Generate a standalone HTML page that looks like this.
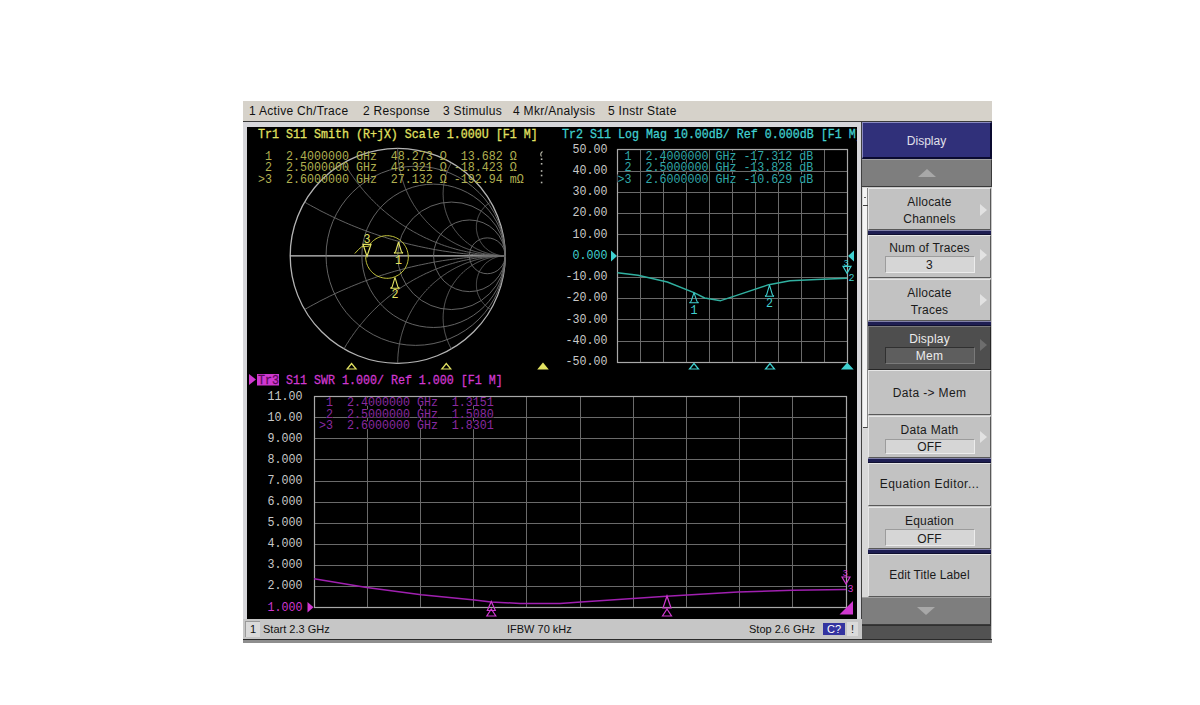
<!DOCTYPE html><html><head><meta charset="utf-8"><style>
*{margin:0;padding:0;box-sizing:border-box}
html,body{width:1200px;height:705px;background:#fff;overflow:hidden;position:relative;font-family:"Liberation Sans",sans-serif}
.a{position:absolute}
.menu{left:243px;top:101px;width:749px;height:20px;background:#d6d2ca}
.menu span{position:absolute;top:3px;font-size:12px;color:#111;letter-spacing:0.3px;white-space:nowrap}
.sk{position:absolute;left:868px;width:123px;background:#c4c4c4;border-top:1px solid #e8e8e8;border-left:1px solid #e8e8e8;border-right:1px solid #5a5a5a;border-bottom:1px solid #5a5a5a;color:#1a1a1a;font-size:12px;text-align:center;white-space:nowrap}
.sk .t{position:absolute;left:0;right:0}
.sk .box{position:absolute;left:16px;width:91px;height:15px;background:#d4d4d4;border-top:1px solid #707070;border-left:1px solid #707070;border-bottom:1px solid #f0f0f0;border-right:1px solid #f0f0f0;text-align:center;line-height:13px}
.arr{position:absolute;right:2px;width:0;height:0;border-top:8px solid transparent;border-bottom:8px solid transparent;border-left:6px solid #e4e4e4}
.sep{position:absolute;left:868px;width:123px;background:#24245a}
</style></head><body>
<div class="a menu">
<span style="left:6px">1 Active Ch/Trace</span>
<span style="left:120px">2 Response</span>
<span style="left:200px">3 Stimulus</span>
<span style="left:270px">4 Mkr/Analysis</span>
<span style="left:365px">5 Instr State</span>
</div>
<div class="a" style="left:243px;top:121px;width:749px;height:1px;background:#3a3a3a"></div>
<div class="a" style="left:243px;top:122px;width:619px;height:497px;background:#d6d6da"></div>
<div class="a" style="left:861px;top:122px;width:1px;height:497px;background:#404040"></div>
<div class="a" style="left:247px;top:127px;width:610px;height:492px;background:#000"></div>
<div class="a" style="left:862px;top:122px;width:130px;height:521px;background:#c8c8c8"></div>
<div class="a" style="left:243px;top:619px;width:619px;height:20px;background:#c6c6c6"></div>
<div class="a" style="left:245px;top:621px;width:15px;height:16px;background:#dadada;border-top:1px solid #9a9a9a;border-left:1px solid #9a9a9a;font-size:11px;line-height:14px;text-align:center;color:#111">1</div>
<div class="a" style="left:263px;top:623px;font-size:11px;color:#111;white-space:nowrap">Start 2.3 GHz</div>
<div class="a" style="left:507px;top:623px;font-size:11px;color:#111;white-space:nowrap">IFBW 70 kHz</div>
<div class="a" style="left:749px;top:623px;font-size:11px;color:#111;white-space:nowrap">Stop 2.6 GHz</div>
<div class="a" style="left:823px;top:623px;width:22px;height:12px;background:#3434a0;color:#fff;font-size:11px;line-height:12px;text-align:center">C?</div>
<div class="a" style="left:847px;top:622px;width:11px;height:14px;background:#dadada;color:#111;font-size:11px;line-height:14px;text-align:center">!</div>
<div class="a" style="left:862px;top:187px;width:6px;height:431px;background:#d8d8d8"></div>
<div class="a" style="left:863px;top:188px;width:5px;height:240px;background:#f4f4f4;border-right:1px solid #888;border-bottom:1px solid #444"></div>
<div class="a" style="left:863px;top:205px;width:5px;height:1px;background:#404040"></div>
<div class="a" style="left:864px;top:197px;width:2px;height:1px;background:#606060"></div>
<div class="a" style="left:862px;top:122px;width:130px;height:37px;background:#30307a;border-top:1px solid #8a8ac0;border-left:1px solid #8a8ac0;border-right:2px solid #0a0a30;border-bottom:2px solid #0a0a30;"></div>
<div class="a" style="left:846.5px;width:160px;top:135.34px;line-height:12px;font-size:12px;color:#e0e0ea;text-align:center;letter-spacing:0px;white-space:pre">Display</div>
<div class="a" style="left:862px;top:159px;width:130px;height:28px;background:#7e7e7e;border-top:1px solid #a0a0a0;border-bottom:1px solid #3a3a3a;border-right:1px solid #3a3a3a"></div>
<div class="a" style="left:918px;top:169px;width:0;height:0;border-left:9px solid transparent;border-right:9px solid transparent;border-bottom:8px solid #a8a8a8"></div>
<div class="a" style="left:868px;top:188px;width:123px;height:42px;background:#c2c2c2;border-top:1px solid #e6e6e6;border-left:1px solid #e6e6e6;border-right:1px solid #585858;border-bottom:1px solid #585858"></div>
<div class="a" style="left:849.5px;width:160px;top:196.44px;line-height:12px;font-size:12px;color:#1a1a1a;text-align:center;letter-spacing:0.2px;white-space:pre">Allocate</div>
<div class="a" style="left:849.5px;width:160px;top:213.24px;line-height:12px;font-size:12px;color:#1a1a1a;text-align:center;letter-spacing:0.2px;white-space:pre">Channels</div>
<div class="a" style="left:980px;top:203.8px;width:0;height:0;border-top:6.5px solid transparent;border-bottom:6.5px solid transparent;border-left:7px solid #e2e2e2"></div>
<div class="a" style="left:868px;top:230px;width:123px;height:5px;background:#1e1e52;border-top:1px solid #8080a8;border-bottom:1px solid #101030"></div>
<div class="a" style="left:868px;top:235px;width:123px;height:43px;background:#c2c2c2;border-top:1px solid #e6e6e6;border-left:1px solid #e6e6e6;border-right:1px solid #585858;border-bottom:1px solid #585858"></div>
<div class="a" style="left:849.5px;width:160px;top:241.84px;line-height:12px;font-size:12px;color:#1a1a1a;text-align:center;letter-spacing:0.2px;white-space:pre">Num of Traces</div>
<div class="a" style="left:885px;top:256.4px;width:90px;height:16.200000000000045px;background:#d6d6d6;border-top:1px solid #9c9c9c;border-left:1px solid #9c9c9c;border-right:1px solid #ececec;border-bottom:1px solid #ececec"></div>
<div class="a" style="left:849.5px;width:160px;top:259.04px;line-height:12px;font-size:12px;color:#1a1a1a;text-align:center;letter-spacing:0.2px;white-space:pre">3</div>
<div class="a" style="left:980px;top:249.0px;width:0;height:0;border-top:6.5px solid transparent;border-bottom:6.5px solid transparent;border-left:7px solid #e2e2e2"></div>
<div class="a" style="left:868px;top:279px;width:123px;height:42px;background:#c2c2c2;border-top:1px solid #e6e6e6;border-left:1px solid #e6e6e6;border-right:1px solid #585858;border-bottom:1px solid #585858"></div>
<div class="a" style="left:849.5px;width:160px;top:287.34px;line-height:12px;font-size:12px;color:#1a1a1a;text-align:center;letter-spacing:0.2px;white-space:pre">Allocate</div>
<div class="a" style="left:849.5px;width:160px;top:304.24px;line-height:12px;font-size:12px;color:#1a1a1a;text-align:center;letter-spacing:0.2px;white-space:pre">Traces</div>
<div class="a" style="left:980px;top:293.5px;width:0;height:0;border-top:6.5px solid transparent;border-bottom:6.5px solid transparent;border-left:7px solid #e2e2e2"></div>
<div class="a" style="left:868px;top:321px;width:123px;height:5px;background:#1e1e52;border-top:1px solid #8080a8;border-bottom:1px solid #101030"></div>
<div class="a" style="left:868px;top:326px;width:123px;height:43.5px;background:#4e4e4e;border-top:1px solid #7a7a7a;border-left:1px solid #7a7a7a;border-right:1px solid #262626;border-bottom:1px solid #262626"></div>
<div class="a" style="left:849.5px;width:160px;top:332.54px;line-height:12px;font-size:12px;color:#ececec;text-align:center;letter-spacing:0.2px;white-space:pre">Display</div>
<div class="a" style="left:885px;top:346.7px;width:90px;height:16.900000000000034px;background:#5e5e5e;border-top:1px solid #303030;border-left:1px solid #303030;border-right:1px solid #7a7a7a;border-bottom:1px solid #7a7a7a"></div>
<div class="a" style="left:849.5px;width:160px;top:350.04px;line-height:12px;font-size:12px;color:#ececec;text-align:center;letter-spacing:0.2px;white-space:pre">Mem</div>
<div class="a" style="left:980px;top:339.3px;width:0;height:0;border-top:6.5px solid transparent;border-bottom:6.5px solid transparent;border-left:7px solid #6e6e6e"></div>
<div class="a" style="left:868px;top:370px;width:123px;height:44.5px;background:#c2c2c2;border-top:1px solid #e6e6e6;border-left:1px solid #e6e6e6;border-right:1px solid #585858;border-bottom:1px solid #585858"></div>
<div class="a" style="left:849.5px;width:160px;top:386.84px;line-height:12px;font-size:12px;color:#1a1a1a;text-align:center;letter-spacing:0.35px;white-space:pre">Data -&gt; Mem</div>
<div class="a" style="left:868px;top:415.5px;width:123px;height:42.0px;background:#c2c2c2;border-top:1px solid #e6e6e6;border-left:1px solid #e6e6e6;border-right:1px solid #585858;border-bottom:1px solid #585858"></div>
<div class="a" style="left:849.5px;width:160px;top:423.84px;line-height:12px;font-size:12px;color:#1a1a1a;text-align:center;letter-spacing:0.29px;white-space:pre">Data Math</div>
<div class="a" style="left:885px;top:438.7px;width:90px;height:15.5px;background:#d6d6d6;border-top:1px solid #9c9c9c;border-left:1px solid #9c9c9c;border-right:1px solid #ececec;border-bottom:1px solid #ececec"></div>
<div class="a" style="left:849.5px;width:160px;top:441.34px;line-height:12px;font-size:12px;color:#1a1a1a;text-align:center;letter-spacing:0.2px;white-space:pre">OFF</div>
<div class="a" style="left:980px;top:430.8px;width:0;height:0;border-top:6.5px solid transparent;border-bottom:6.5px solid transparent;border-left:7px solid #e2e2e2"></div>
<div class="a" style="left:868px;top:457.5px;width:123px;height:5.5px;background:#1e1e52;border-top:1px solid #8080a8;border-bottom:1px solid #101030"></div>
<div class="a" style="left:868px;top:463px;width:123px;height:43px;background:#c2c2c2;border-top:1px solid #e6e6e6;border-left:1px solid #e6e6e6;border-right:1px solid #585858;border-bottom:1px solid #585858"></div>
<div class="a" style="left:849.5px;width:160px;top:478.04px;line-height:12px;font-size:12px;color:#1a1a1a;text-align:center;letter-spacing:0.45px;white-space:pre">Equation Editor...</div>
<div class="a" style="left:868px;top:506.5px;width:123px;height:42.0px;background:#c2c2c2;border-top:1px solid #e6e6e6;border-left:1px solid #e6e6e6;border-right:1px solid #585858;border-bottom:1px solid #585858"></div>
<div class="a" style="left:849.5px;width:160px;top:515.44px;line-height:12px;font-size:12px;color:#1a1a1a;text-align:center;letter-spacing:0.2px;white-space:pre">Equation</div>
<div class="a" style="left:885px;top:529px;width:90px;height:17px;background:#d6d6d6;border-top:1px solid #9c9c9c;border-left:1px solid #9c9c9c;border-right:1px solid #ececec;border-bottom:1px solid #ececec"></div>
<div class="a" style="left:849.5px;width:160px;top:532.74px;line-height:12px;font-size:12px;color:#1a1a1a;text-align:center;letter-spacing:0.2px;white-space:pre">OFF</div>
<div class="a" style="left:868px;top:548.5px;width:123px;height:5.5px;background:#1e1e52;border-top:1px solid #8080a8;border-bottom:1px solid #101030"></div>
<div class="a" style="left:868px;top:554px;width:123px;height:43px;background:#c2c2c2;border-top:1px solid #e6e6e6;border-left:1px solid #e6e6e6;border-right:1px solid #585858;border-bottom:1px solid #585858"></div>
<div class="a" style="left:849.5px;width:160px;top:568.64px;line-height:12px;font-size:12px;color:#1a1a1a;text-align:center;letter-spacing:0.1px;white-space:pre">Edit Title Label</div>
<div class="a" style="left:862px;top:597px;width:129px;height:28px;background:#7e7e7e;border-top:1px solid #a0a0a0;border-bottom:1px solid #3a3a3a;border-right:1px solid #3a3a3a"></div>
<div class="a" style="left:917px;top:607px;width:0;height:0;border-left:9px solid transparent;border-right:9px solid transparent;border-top:8px solid #a8a8a8"></div>
<div class="a" style="left:862px;top:625px;width:129px;height:14px;background:#525252;border-top:1px solid #303030"></div>
<div class="a" style="left:243px;top:639px;width:749px;height:1.5px;background:#2a2a2a"></div>
<div class="a" style="left:243px;top:640px;width:749px;height:3px;background:#8e8e8e"></div>
<svg class="a" style="left:0;top:0" width="1200" height="705" viewBox="0 0 1200 705" font-family="Liberation Mono, monospace">
<defs><clipPath id="blk"><rect x="247" y="127" width="610" height="492"/></clipPath></defs><g clip-path="url(#blk)">
<circle cx="397.7" cy="255.8" r="107.5" fill="none" stroke="#b4b4b4" stroke-width="1.3"/>
<line x1="290.2" y1="255.8" x2="505.2" y2="255.8" stroke="#c8c8c8" stroke-width="1.3"/>
<circle cx="415.62" cy="255.80" r="89.58" fill="none" stroke="#6e6e6e" stroke-width="0.9"/>
<circle cx="433.53" cy="255.80" r="71.67" fill="none" stroke="#6e6e6e" stroke-width="0.9"/>
<circle cx="451.45" cy="255.80" r="53.75" fill="none" stroke="#6e6e6e" stroke-width="0.9"/>
<circle cx="469.37" cy="255.80" r="35.83" fill="none" stroke="#6e6e6e" stroke-width="0.9"/>
<circle cx="487.28" cy="255.80" r="17.92" fill="none" stroke="#6e6e6e" stroke-width="0.9"/>
<path d="M304.6,202.0 L307.6,203.8 L310.7,205.5 L313.8,207.2 L316.9,208.8 L319.9,210.5 L323.1,212.1 L326.2,213.6 L329.3,215.2 L332.5,216.7 L335.6,218.2 L338.8,219.7 L342.0,221.1 L345.2,222.5 L348.4,223.9 L351.7,225.3 L354.9,226.6 L358.2,227.9 L361.4,229.2 L364.7,230.4 L368.0,231.6 L371.3,232.8 L374.6,233.9 L377.9,235.1 L381.2,236.2 L384.6,237.2 L387.9,238.3 L391.3,239.3 L394.6,240.3 L398.0,241.2 L401.4,242.1 L404.7,243.0 L408.1,243.9 L411.5,244.7 L415.0,245.5 L418.4,246.3 L421.8,247.0 L425.2,247.7 L428.6,248.4 L432.1,249.1 L435.5,249.7 L439.0,250.3 L442.4,250.9 L445.9,251.4 L449.4,251.9 L452.8,252.4 L456.3,252.8 L459.8,253.2 L463.3,253.6 L466.7,254.0 L470.2,254.3 L473.7,254.6 L477.2,254.8 L480.7,255.1 L484.2,255.3 L487.7,255.4 L491.2,255.6 L494.7,255.7 L498.2,255.7 L501.7,255.8 L505.2,255.8" fill="none" stroke="#6e6e6e" stroke-width="0.9"/>
<path d="M505.2,255.8 L501.7,255.8 L498.2,255.9 L494.7,255.9 L491.2,256.0 L487.7,256.2 L484.2,256.3 L480.7,256.5 L477.2,256.8 L473.7,257.0 L470.2,257.3 L466.7,257.6 L463.3,258.0 L459.8,258.4 L456.3,258.8 L452.8,259.2 L449.4,259.7 L445.9,260.2 L442.4,260.7 L439.0,261.3 L435.5,261.9 L432.1,262.5 L428.6,263.2 L425.2,263.9 L421.8,264.6 L418.4,265.3 L415.0,266.1 L411.5,266.9 L408.1,267.7 L404.7,268.6 L401.4,269.5 L398.0,270.4 L394.6,271.3 L391.3,272.3 L387.9,273.3 L384.6,274.4 L381.2,275.4 L377.9,276.5 L374.6,277.7 L371.3,278.8 L368.0,280.0 L364.7,281.2 L361.4,282.4 L358.2,283.7 L354.9,285.0 L351.7,286.3 L348.4,287.7 L345.2,289.1 L342.0,290.5 L338.8,291.9 L335.6,293.4 L332.5,294.9 L329.3,296.4 L326.2,298.0 L323.1,299.5 L319.9,301.1 L316.9,302.8 L313.8,304.4 L310.7,306.1 L307.6,307.8 L304.6,309.6" fill="none" stroke="#6e6e6e" stroke-width="0.9"/>
<path d="M343.9,162.7 L344.8,164.1 L345.6,165.5 L346.4,166.9 L347.3,168.3 L348.2,169.6 L349.0,171.0 L349.9,172.4 L350.8,173.7 L351.8,175.1 L352.7,176.4 L353.6,177.7 L354.6,179.0 L355.5,180.4 L356.5,181.7 L357.5,183.0 L358.5,184.2 L359.5,185.5 L360.5,186.8 L361.5,188.0 L362.6,189.3 L363.6,190.5 L364.7,191.8 L365.7,193.0 L366.8,194.2 L367.9,195.4 L369.0,196.6 L370.1,197.8 L371.3,198.9 L372.4,200.1 L373.5,201.3 L374.7,202.4 L375.9,203.5 L377.0,204.7 L378.2,205.8 L379.4,206.9 L380.6,208.0 L381.8,209.1 L383.0,210.1 L384.3,211.2 L385.5,212.2 L386.8,213.3 L388.0,214.3 L389.3,215.3 L390.6,216.3 L391.9,217.3 L393.1,218.3 L394.4,219.3 L395.8,220.2 L397.1,221.2 L398.4,222.1 L399.7,223.1 L401.1,224.0 L402.4,224.9 L403.8,225.8 L405.2,226.6 L406.5,227.5 L407.9,228.4 L409.3,229.2 L410.7,230.0 L412.1,230.9 L413.5,231.7 L414.9,232.5 L416.4,233.2 L417.8,234.0 L419.2,234.8 L420.7,235.5 L422.1,236.2 L423.6,237.0 L425.0,237.7 L426.5,238.4 L428.0,239.0 L429.5,239.7 L431.0,240.4 L432.4,241.0 L433.9,241.6 L435.4,242.2 L437.0,242.8 L438.5,243.4 L440.0,244.0 L441.5,244.6 L443.0,245.1 L444.6,245.7 L446.1,246.2 L447.7,246.7 L449.2,247.2 L450.8,247.7 L452.3,248.1 L453.9,248.6 L455.4,249.0 L457.0,249.5 L458.6,249.9 L460.2,250.3 L461.7,250.7 L463.3,251.0 L464.9,251.4 L466.5,251.7 L468.1,252.1 L469.7,252.4 L471.3,252.7 L472.9,253.0 L474.5,253.2 L476.1,253.5 L477.7,253.8 L479.3,254.0 L480.9,254.2 L482.5,254.4 L484.1,254.6 L485.7,254.8 L487.4,254.9 L489.0,255.1 L490.6,255.2 L492.2,255.3 L493.8,255.5 L495.5,255.5 L497.1,255.6 L498.7,255.7 L500.3,255.7 L502.0,255.8 L503.6,255.8 L505.2,255.8" fill="none" stroke="#6e6e6e" stroke-width="0.9"/>
<path d="M505.2,255.8 L503.6,255.8 L502.0,255.8 L500.3,255.9 L498.7,255.9 L497.1,256.0 L495.5,256.1 L493.8,256.1 L492.2,256.3 L490.6,256.4 L489.0,256.5 L487.4,256.7 L485.7,256.8 L484.1,257.0 L482.5,257.2 L480.9,257.4 L479.3,257.6 L477.7,257.8 L476.1,258.1 L474.5,258.4 L472.9,258.6 L471.3,258.9 L469.7,259.2 L468.1,259.5 L466.5,259.9 L464.9,260.2 L463.3,260.6 L461.7,260.9 L460.2,261.3 L458.6,261.7 L457.0,262.1 L455.4,262.6 L453.9,263.0 L452.3,263.5 L450.8,263.9 L449.2,264.4 L447.7,264.9 L446.1,265.4 L444.6,265.9 L443.0,266.5 L441.5,267.0 L440.0,267.6 L438.5,268.2 L437.0,268.8 L435.4,269.4 L433.9,270.0 L432.4,270.6 L431.0,271.2 L429.5,271.9 L428.0,272.6 L426.5,273.2 L425.0,273.9 L423.6,274.6 L422.1,275.4 L420.7,276.1 L419.2,276.8 L417.8,277.6 L416.4,278.4 L414.9,279.1 L413.5,279.9 L412.1,280.7 L410.7,281.6 L409.3,282.4 L407.9,283.2 L406.5,284.1 L405.2,285.0 L403.8,285.8 L402.4,286.7 L401.1,287.6 L399.7,288.5 L398.4,289.5 L397.1,290.4 L395.8,291.4 L394.4,292.3 L393.1,293.3 L391.9,294.3 L390.6,295.3 L389.3,296.3 L388.0,297.3 L386.8,298.3 L385.5,299.4 L384.3,300.4 L383.0,301.5 L381.8,302.5 L380.6,303.6 L379.4,304.7 L378.2,305.8 L377.0,306.9 L375.9,308.1 L374.7,309.2 L373.5,310.3 L372.4,311.5 L371.3,312.7 L370.1,313.8 L369.0,315.0 L367.9,316.2 L366.8,317.4 L365.7,318.6 L364.7,319.8 L363.6,321.1 L362.6,322.3 L361.5,323.6 L360.5,324.8 L359.5,326.1 L358.5,327.4 L357.5,328.6 L356.5,329.9 L355.5,331.2 L354.6,332.6 L353.6,333.9 L352.7,335.2 L351.8,336.5 L350.8,337.9 L349.9,339.2 L349.0,340.6 L348.2,342.0 L347.3,343.3 L346.4,344.7 L345.6,346.1 L344.8,347.5 L343.9,348.9" fill="none" stroke="#6e6e6e" stroke-width="0.9"/>
<path d="M397.7,148.3 L397.7,149.2 L397.7,150.2 L397.7,151.1 L397.8,152.1 L397.8,153.0 L397.8,153.9 L397.9,154.9 L398.0,155.8 L398.0,156.7 L398.1,157.7 L398.2,158.6 L398.3,159.5 L398.4,160.5 L398.5,161.4 L398.6,162.3 L398.7,163.3 L398.9,164.2 L399.0,165.1 L399.2,166.0 L399.3,167.0 L399.5,167.9 L399.7,168.8 L399.9,169.7 L400.0,170.7 L400.2,171.6 L400.5,172.5 L400.7,173.4 L400.9,174.3 L401.1,175.2 L401.4,176.1 L401.6,177.0 L401.9,177.9 L402.1,178.8 L402.4,179.7 L402.7,180.6 L403.0,181.5 L403.3,182.4 L403.6,183.3 L403.9,184.2 L404.2,185.1 L404.5,185.9 L404.8,186.8 L405.2,187.7 L405.5,188.6 L405.9,189.4 L406.2,190.3 L406.6,191.2 L407.0,192.0 L407.4,192.9 L407.8,193.7 L408.2,194.6 L408.6,195.4 L409.0,196.3 L409.4,197.1 L409.8,197.9 L410.3,198.8 L410.7,199.6 L411.2,200.4 L411.6,201.2 L412.1,202.1 L412.6,202.9 L413.1,203.7 L413.5,204.5 L414.0,205.3 L414.5,206.1 L415.0,206.8 L415.6,207.6 L416.1,208.4 L416.6,209.2 L417.1,210.0 L417.7,210.7 L418.2,211.5 L418.8,212.2 L419.3,213.0 L419.9,213.7 L420.5,214.5 L421.1,215.2 L421.7,216.0 L422.3,216.7 L422.9,217.4 L423.5,218.1 L424.1,218.8 L424.7,219.5 L425.3,220.2 L425.9,220.9 L426.6,221.6 L427.2,222.3 L427.9,223.0 L428.5,223.6 L429.2,224.3 L429.9,225.0 L430.5,225.6 L431.2,226.3 L431.9,226.9 L432.6,227.6 L433.3,228.2 L434.0,228.8 L434.7,229.4 L435.4,230.0 L436.1,230.6 L436.8,231.2 L437.5,231.8 L438.3,232.4 L439.0,233.0 L439.8,233.6 L440.5,234.2 L441.3,234.7 L442.0,235.3 L442.8,235.8 L443.5,236.4 L444.3,236.9 L445.1,237.4 L445.9,237.9 L446.7,238.5 L447.4,239.0 L448.2,239.5 L449.0,240.0 L449.8,240.4 L450.6,240.9 L451.4,241.4 L452.3,241.9 L453.1,242.3 L453.9,242.8 L454.7,243.2 L455.6,243.7 L456.4,244.1 L457.2,244.5 L458.1,244.9 L458.9,245.3 L459.8,245.7 L460.6,246.1 L461.5,246.5 L462.3,246.9 L463.2,247.3 L464.1,247.6 L464.9,248.0 L465.8,248.3 L466.7,248.7 L467.6,249.0 L468.4,249.3 L469.3,249.6 L470.2,249.9 L471.1,250.2 L472.0,250.5 L472.9,250.8 L473.8,251.1 L474.7,251.4 L475.6,251.6 L476.5,251.9 L477.4,252.1 L478.3,252.4 L479.2,252.6 L480.1,252.8 L481.0,253.0 L481.9,253.3 L482.8,253.5 L483.8,253.6 L484.7,253.8 L485.6,254.0 L486.5,254.2 L487.5,254.3 L488.4,254.5 L489.3,254.6 L490.2,254.8 L491.2,254.9 L492.1,255.0 L493.0,255.1 L494.0,255.2 L494.9,255.3 L495.8,255.4 L496.8,255.5 L497.7,255.5 L498.6,255.6 L499.6,255.7 L500.5,255.7 L501.4,255.7 L502.4,255.8 L503.3,255.8 L504.3,255.8 L505.2,255.8" fill="none" stroke="#6e6e6e" stroke-width="0.9"/>
<path d="M505.2,255.8 L504.3,255.8 L503.3,255.8 L502.4,255.8 L501.4,255.9 L500.5,255.9 L499.6,255.9 L498.6,256.0 L497.7,256.1 L496.8,256.1 L495.8,256.2 L494.9,256.3 L494.0,256.4 L493.0,256.5 L492.1,256.6 L491.2,256.7 L490.2,256.8 L489.3,257.0 L488.4,257.1 L487.5,257.3 L486.5,257.4 L485.6,257.6 L484.7,257.8 L483.8,258.0 L482.8,258.1 L481.9,258.3 L481.0,258.6 L480.1,258.8 L479.2,259.0 L478.3,259.2 L477.4,259.5 L476.5,259.7 L475.6,260.0 L474.7,260.2 L473.8,260.5 L472.9,260.8 L472.0,261.1 L471.1,261.4 L470.2,261.7 L469.3,262.0 L468.4,262.3 L467.6,262.6 L466.7,262.9 L465.8,263.3 L464.9,263.6 L464.1,264.0 L463.2,264.3 L462.3,264.7 L461.5,265.1 L460.6,265.5 L459.8,265.9 L458.9,266.3 L458.1,266.7 L457.2,267.1 L456.4,267.5 L455.6,267.9 L454.7,268.4 L453.9,268.8 L453.1,269.3 L452.3,269.7 L451.4,270.2 L450.6,270.7 L449.8,271.2 L449.0,271.6 L448.2,272.1 L447.4,272.6 L446.7,273.1 L445.9,273.7 L445.1,274.2 L444.3,274.7 L443.5,275.2 L442.8,275.8 L442.0,276.3 L441.3,276.9 L440.5,277.4 L439.8,278.0 L439.0,278.6 L438.3,279.2 L437.5,279.8 L436.8,280.4 L436.1,281.0 L435.4,281.6 L434.7,282.2 L434.0,282.8 L433.3,283.4 L432.6,284.0 L431.9,284.7 L431.2,285.3 L430.5,286.0 L429.9,286.6 L429.2,287.3 L428.5,288.0 L427.9,288.6 L427.2,289.3 L426.6,290.0 L425.9,290.7 L425.3,291.4 L424.7,292.1 L424.1,292.8 L423.5,293.5 L422.9,294.2 L422.3,294.9 L421.7,295.6 L421.1,296.4 L420.5,297.1 L419.9,297.9 L419.3,298.6 L418.8,299.4 L418.2,300.1 L417.7,300.9 L417.1,301.6 L416.6,302.4 L416.1,303.2 L415.6,304.0 L415.0,304.8 L414.5,305.5 L414.0,306.3 L413.5,307.1 L413.1,307.9 L412.6,308.7 L412.1,309.6 L411.6,310.4 L411.2,311.2 L410.7,312.0 L410.3,312.8 L409.8,313.7 L409.4,314.5 L409.0,315.3 L408.6,316.2 L408.2,317.0 L407.8,317.9 L407.4,318.7 L407.0,319.6 L406.6,320.4 L406.2,321.3 L405.9,322.2 L405.5,323.0 L405.2,323.9 L404.8,324.8 L404.5,325.7 L404.2,326.5 L403.9,327.4 L403.6,328.3 L403.3,329.2 L403.0,330.1 L402.7,331.0 L402.4,331.9 L402.1,332.8 L401.9,333.7 L401.6,334.6 L401.4,335.5 L401.1,336.4 L400.9,337.3 L400.7,338.2 L400.5,339.1 L400.2,340.0 L400.0,340.9 L399.9,341.9 L399.7,342.8 L399.5,343.7 L399.3,344.6 L399.2,345.6 L399.0,346.5 L398.9,347.4 L398.7,348.3 L398.6,349.3 L398.5,350.2 L398.4,351.1 L398.3,352.1 L398.2,353.0 L398.1,353.9 L398.0,354.9 L398.0,355.8 L397.9,356.7 L397.8,357.7 L397.8,358.6 L397.8,359.5 L397.7,360.5 L397.7,361.4 L397.7,362.4 L397.7,363.3" fill="none" stroke="#6e6e6e" stroke-width="0.9"/>
<path d="M451.4,162.7 L451.2,163.2 L450.9,163.6 L450.7,164.1 L450.4,164.6 L450.1,165.1 L449.9,165.6 L449.7,166.0 L449.4,166.5 L449.2,167.0 L448.9,167.5 L448.7,168.0 L448.5,168.5 L448.3,169.0 L448.1,169.5 L447.9,170.0 L447.7,170.5 L447.5,171.0 L447.3,171.5 L447.1,172.0 L446.9,172.5 L446.7,173.0 L446.5,173.5 L446.3,174.0 L446.2,174.6 L446.0,175.1 L445.8,175.6 L445.7,176.1 L445.5,176.6 L445.4,177.1 L445.2,177.7 L445.1,178.2 L445.0,178.7 L444.8,179.2 L444.7,179.8 L444.6,180.3 L444.5,180.8 L444.4,181.4 L444.3,181.9 L444.2,182.4 L444.1,183.0 L444.0,183.5 L443.9,184.0 L443.8,184.6 L443.7,185.1 L443.7,185.6 L443.6,186.2 L443.5,186.7 L443.5,187.2 L443.4,187.8 L443.4,188.3 L443.3,188.9 L443.3,189.4 L443.3,189.9 L443.2,190.5 L443.2,191.0 L443.2,191.6 L443.2,192.1 L443.1,192.7 L443.1,193.2 L443.1,193.7 L443.1,194.3 L443.1,194.8 L443.2,195.4 L443.2,195.9 L443.2,196.4 L443.2,197.0 L443.3,197.5 L443.3,198.1 L443.3,198.6 L443.4,199.1 L443.4,199.7 L443.5,200.2 L443.5,200.8 L443.6,201.3 L443.7,201.8 L443.7,202.4 L443.8,202.9 L443.9,203.4 L444.0,204.0 L444.1,204.5 L444.2,205.0 L444.3,205.6 L444.4,206.1 L444.5,206.6 L444.6,207.2 L444.7,207.7 L444.8,208.2 L445.0,208.7 L445.1,209.3 L445.2,209.8 L445.4,210.3 L445.5,210.8 L445.7,211.4 L445.8,211.9 L446.0,212.4 L446.2,212.9 L446.3,213.4 L446.5,213.9 L446.7,214.5 L446.9,215.0 L447.1,215.5 L447.3,216.0 L447.5,216.5 L447.7,217.0 L447.9,217.5 L448.1,218.0 L448.3,218.5 L448.5,219.0 L448.7,219.5 L448.9,220.0 L449.2,220.5 L449.4,220.9 L449.7,221.4 L449.9,221.9 L450.1,222.4 L450.4,222.9 L450.7,223.3 L450.9,223.8 L451.2,224.3 L451.4,224.8 L451.7,225.2 L452.0,225.7 L452.3,226.2 L452.6,226.6 L452.9,227.1 L453.1,227.5 L453.4,228.0 L453.7,228.4 L454.1,228.9 L454.4,229.3 L454.7,229.8 L455.0,230.2 L455.3,230.7 L455.6,231.1 L456.0,231.5 L456.3,231.9 L456.6,232.4 L457.0,232.8 L457.3,233.2 L457.7,233.6 L458.0,234.0 L458.4,234.5 L458.7,234.9 L459.1,235.3 L459.4,235.7 L459.8,236.1 L460.2,236.5 L460.6,236.8 L460.9,237.2 L461.3,237.6 L461.7,238.0 L462.1,238.4 L462.5,238.8 L462.9,239.1 L463.3,239.5 L463.7,239.9 L464.1,240.2 L464.5,240.6 L464.9,240.9 L465.3,241.3 L465.7,241.6 L466.1,242.0 L466.6,242.3 L467.0,242.6 L467.4,243.0 L467.8,243.3 L468.3,243.6 L468.7,243.9 L469.2,244.3 L469.6,244.6 L470.0,244.9 L470.5,245.2 L470.9,245.5 L471.4,245.8 L471.9,246.1 L472.3,246.4 L472.8,246.7 L473.2,246.9 L473.7,247.2 L474.2,247.5 L474.6,247.8 L475.1,248.0 L475.6,248.3 L476.1,248.5 L476.5,248.8 L477.0,249.0 L477.5,249.3 L478.0,249.5 L478.5,249.8 L479.0,250.0 L479.5,250.2 L480.0,250.4 L480.5,250.7 L480.9,250.9 L481.4,251.1 L481.9,251.3 L482.5,251.5 L483.0,251.7 L483.5,251.9 L484.0,252.1 L484.5,252.2 L485.0,252.4 L485.5,252.6 L486.0,252.8 L486.5,252.9 L487.1,253.1 L487.6,253.2 L488.1,253.4 L488.6,253.5 L489.1,253.7 L489.7,253.8 L490.2,254.0 L490.7,254.1 L491.2,254.2 L491.8,254.3 L492.3,254.4 L492.8,254.6 L493.4,254.7 L493.9,254.8 L494.4,254.9 L495.0,254.9 L495.5,255.0 L496.0,255.1 L496.6,255.2 L497.1,255.3 L497.6,255.3 L498.2,255.4 L498.7,255.5 L499.3,255.5 L499.8,255.6 L500.3,255.6 L500.9,255.6 L501.4,255.7 L502.0,255.7 L502.5,255.7 L503.0,255.8 L503.6,255.8 L504.1,255.8 L504.7,255.8 L505.2,255.8" fill="none" stroke="#6e6e6e" stroke-width="0.9"/>
<path d="M505.2,255.8 L504.7,255.8 L504.1,255.8 L503.6,255.8 L503.0,255.8 L502.5,255.9 L502.0,255.9 L501.4,255.9 L500.9,256.0 L500.3,256.0 L499.8,256.0 L499.3,256.1 L498.7,256.1 L498.2,256.2 L497.6,256.3 L497.1,256.3 L496.6,256.4 L496.0,256.5 L495.5,256.6 L495.0,256.7 L494.4,256.7 L493.9,256.8 L493.4,256.9 L492.8,257.0 L492.3,257.2 L491.8,257.3 L491.2,257.4 L490.7,257.5 L490.2,257.6 L489.7,257.8 L489.1,257.9 L488.6,258.1 L488.1,258.2 L487.6,258.4 L487.1,258.5 L486.5,258.7 L486.0,258.8 L485.5,259.0 L485.0,259.2 L484.5,259.4 L484.0,259.5 L483.5,259.7 L483.0,259.9 L482.5,260.1 L481.9,260.3 L481.4,260.5 L480.9,260.7 L480.5,260.9 L480.0,261.2 L479.5,261.4 L479.0,261.6 L478.5,261.8 L478.0,262.1 L477.5,262.3 L477.0,262.6 L476.5,262.8 L476.1,263.1 L475.6,263.3 L475.1,263.6 L474.6,263.8 L474.2,264.1 L473.7,264.4 L473.2,264.7 L472.8,264.9 L472.3,265.2 L471.9,265.5 L471.4,265.8 L470.9,266.1 L470.5,266.4 L470.0,266.7 L469.6,267.0 L469.2,267.3 L468.7,267.7 L468.3,268.0 L467.8,268.3 L467.4,268.6 L467.0,269.0 L466.6,269.3 L466.1,269.6 L465.7,270.0 L465.3,270.3 L464.9,270.7 L464.5,271.0 L464.1,271.4 L463.7,271.7 L463.3,272.1 L462.9,272.5 L462.5,272.8 L462.1,273.2 L461.7,273.6 L461.3,274.0 L460.9,274.4 L460.6,274.8 L460.2,275.1 L459.8,275.5 L459.4,275.9 L459.1,276.3 L458.7,276.7 L458.4,277.1 L458.0,277.6 L457.7,278.0 L457.3,278.4 L457.0,278.8 L456.6,279.2 L456.3,279.7 L456.0,280.1 L455.6,280.5 L455.3,280.9 L455.0,281.4 L454.7,281.8 L454.4,282.3 L454.1,282.7 L453.7,283.2 L453.4,283.6 L453.1,284.1 L452.9,284.5 L452.6,285.0 L452.3,285.4 L452.0,285.9 L451.7,286.4 L451.4,286.8 L451.2,287.3 L450.9,287.8 L450.7,288.3 L450.4,288.7 L450.1,289.2 L449.9,289.7 L449.7,290.2 L449.4,290.7 L449.2,291.1 L448.9,291.6 L448.7,292.1 L448.5,292.6 L448.3,293.1 L448.1,293.6 L447.9,294.1 L447.7,294.6 L447.5,295.1 L447.3,295.6 L447.1,296.1 L446.9,296.6 L446.7,297.1 L446.5,297.7 L446.3,298.2 L446.2,298.7 L446.0,299.2 L445.8,299.7 L445.7,300.2 L445.5,300.8 L445.4,301.3 L445.2,301.8 L445.1,302.3 L445.0,302.9 L444.8,303.4 L444.7,303.9 L444.6,304.4 L444.5,305.0 L444.4,305.5 L444.3,306.0 L444.2,306.6 L444.1,307.1 L444.0,307.6 L443.9,308.2 L443.8,308.7 L443.7,309.2 L443.7,309.8 L443.6,310.3 L443.5,310.8 L443.5,311.4 L443.4,311.9 L443.4,312.5 L443.3,313.0 L443.3,313.5 L443.3,314.1 L443.2,314.6 L443.2,315.2 L443.2,315.7 L443.2,316.2 L443.1,316.8 L443.1,317.3 L443.1,317.9 L443.1,318.4 L443.1,318.9 L443.2,319.5 L443.2,320.0 L443.2,320.6 L443.2,321.1 L443.3,321.7 L443.3,322.2 L443.3,322.7 L443.4,323.3 L443.4,323.8 L443.5,324.4 L443.5,324.9 L443.6,325.4 L443.7,326.0 L443.7,326.5 L443.8,327.0 L443.9,327.6 L444.0,328.1 L444.1,328.6 L444.2,329.2 L444.3,329.7 L444.4,330.2 L444.5,330.8 L444.6,331.3 L444.7,331.8 L444.8,332.4 L445.0,332.9 L445.1,333.4 L445.2,333.9 L445.4,334.5 L445.5,335.0 L445.7,335.5 L445.8,336.0 L446.0,336.5 L446.2,337.0 L446.3,337.6 L446.5,338.1 L446.7,338.6 L446.9,339.1 L447.1,339.6 L447.3,340.1 L447.5,340.6 L447.7,341.1 L447.9,341.6 L448.1,342.1 L448.3,342.6 L448.5,343.1 L448.7,343.6 L448.9,344.1 L449.2,344.6 L449.4,345.1 L449.7,345.6 L449.9,346.0 L450.1,346.5 L450.4,347.0 L450.7,347.5 L450.9,348.0 L451.2,348.4 L451.4,348.9" fill="none" stroke="#6e6e6e" stroke-width="0.9"/>
<path d="M490.8,202.1 L490.6,202.2 L490.4,202.3 L490.1,202.4 L489.9,202.6 L489.7,202.7 L489.5,202.8 L489.3,203.0 L489.1,203.1 L488.9,203.3 L488.7,203.4 L488.5,203.5 L488.3,203.7 L488.1,203.8 L487.9,204.0 L487.7,204.1 L487.5,204.3 L487.3,204.5 L487.1,204.6 L486.9,204.8 L486.7,204.9 L486.5,205.1 L486.3,205.3 L486.1,205.4 L485.9,205.6 L485.7,205.8 L485.6,205.9 L485.4,206.1 L485.2,206.3 L485.0,206.5 L484.8,206.6 L484.7,206.8 L484.5,207.0 L484.3,207.2 L484.1,207.4 L484.0,207.5 L483.8,207.7 L483.6,207.9 L483.5,208.1 L483.3,208.3 L483.1,208.5 L483.0,208.7 L482.8,208.9 L482.7,209.1 L482.5,209.3 L482.3,209.5 L482.2,209.7 L482.0,209.9 L481.9,210.1 L481.7,210.3 L481.6,210.5 L481.5,210.7 L481.3,210.9 L481.2,211.1 L481.0,211.3 L480.9,211.5 L480.8,211.7 L480.6,211.9 L480.5,212.2 L480.4,212.4 L480.3,212.6 L480.1,212.8 L480.0,213.0 L479.9,213.3 L479.8,213.5 L479.7,213.7 L479.5,213.9 L479.4,214.1 L479.3,214.4 L479.2,214.6 L479.1,214.8 L479.0,215.1 L478.9,215.3 L478.8,215.5 L478.7,215.7 L478.6,216.0 L478.5,216.2 L478.4,216.4 L478.3,216.7 L478.2,216.9 L478.1,217.1 L478.0,217.4 L478.0,217.6 L477.9,217.9 L477.8,218.1 L477.7,218.3 L477.7,218.6 L477.6,218.8 L477.5,219.1 L477.4,219.3 L477.4,219.5 L477.3,219.8 L477.3,220.0 L477.2,220.3 L477.1,220.5 L477.1,220.8 L477.0,221.0 L477.0,221.3 L476.9,221.5 L476.9,221.7 L476.8,222.0 L476.8,222.2 L476.8,222.5 L476.7,222.7 L476.7,223.0 L476.6,223.2 L476.6,223.5 L476.6,223.7 L476.6,224.0 L476.5,224.2 L476.5,224.5 L476.5,224.7 L476.5,225.0 L476.4,225.2 L476.4,225.5 L476.4,225.7 L476.4,226.0 L476.4,226.2 L476.4,226.5 L476.4,226.7 L476.4,227.0 L476.4,227.2 L476.4,227.5 L476.4,227.7 L476.4,228.0 L476.4,228.3 L476.4,228.5 L476.4,228.8 L476.5,229.0 L476.5,229.3 L476.5,229.5 L476.5,229.8 L476.6,230.0 L476.6,230.3 L476.6,230.5 L476.6,230.8 L476.7,231.0 L476.7,231.3 L476.8,231.5 L476.8,231.7 L476.8,232.0 L476.9,232.2 L476.9,232.5 L477.0,232.7 L477.0,233.0 L477.1,233.2 L477.1,233.5 L477.2,233.7 L477.3,234.0 L477.3,234.2 L477.4,234.5 L477.4,234.7 L477.5,234.9 L477.6,235.2 L477.7,235.4 L477.7,235.7 L477.8,235.9 L477.9,236.1 L478.0,236.4 L478.0,236.6 L478.1,236.8 L478.2,237.1 L478.3,237.3 L478.4,237.6 L478.5,237.8 L478.6,238.0 L478.7,238.3 L478.8,238.5 L478.9,238.7 L479.0,238.9 L479.1,239.2 L479.2,239.4 L479.3,239.6 L479.4,239.8 L479.5,240.1 L479.7,240.3 L479.8,240.5 L479.9,240.7 L480.0,241.0 L480.1,241.2 L480.3,241.4 L480.4,241.6 L480.5,241.8 L480.6,242.0 L480.8,242.3 L480.9,242.5 L481.0,242.7 L481.2,242.9 L481.3,243.1 L481.5,243.3 L481.6,243.5 L481.7,243.7 L481.9,243.9 L482.0,244.1 L482.2,244.3 L482.3,244.5 L482.5,244.7 L482.7,244.9 L482.8,245.1 L483.0,245.3 L483.1,245.5 L483.3,245.7 L483.5,245.9 L483.6,246.1 L483.8,246.3 L484.0,246.5 L484.1,246.6 L484.3,246.8 L484.5,247.0 L484.7,247.2 L484.8,247.4 L485.0,247.5 L485.2,247.7 L485.4,247.9 L485.6,248.1 L485.7,248.2 L485.9,248.4 L486.1,248.6 L486.3,248.7 L486.5,248.9 L486.7,249.1 L486.9,249.2 L487.1,249.4 L487.3,249.5 L487.5,249.7 L487.7,249.8 L487.9,250.0 L488.1,250.2 L488.3,250.3 L488.5,250.4 L488.7,250.6 L488.9,250.7 L489.1,250.9 L489.3,251.0 L489.5,251.2 L489.7,251.3 L489.9,251.4 L490.1,251.6 L490.4,251.7 L490.6,251.8 L490.8,251.9 L491.0,252.1 L491.2,252.2 L491.5,252.3 L491.7,252.4 L491.9,252.5 L492.1,252.7 L492.3,252.8 L492.6,252.9 L492.8,253.0 L493.0,253.1 L493.3,253.2 L493.5,253.3 L493.7,253.4 L493.9,253.5 L494.2,253.6 L494.4,253.7 L494.6,253.8 L494.9,253.9 L495.1,254.0 L495.3,254.1 L495.6,254.1 L495.8,254.2 L496.1,254.3 L496.3,254.4 L496.5,254.5 L496.8,254.5 L497.0,254.6 L497.3,254.7 L497.5,254.8 L497.7,254.8 L498.0,254.9 L498.2,254.9 L498.5,255.0 L498.7,255.1 L499.0,255.1 L499.2,255.2 L499.5,255.2 L499.7,255.3 L500.0,255.3 L500.2,255.4 L500.4,255.4 L500.7,255.4 L500.9,255.5 L501.2,255.5 L501.4,255.6 L501.7,255.6 L501.9,255.6 L502.2,255.6 L502.4,255.7 L502.7,255.7 L502.9,255.7 L503.2,255.7 L503.4,255.7 L503.7,255.8 L503.9,255.8 L504.2,255.8 L504.4,255.8 L504.7,255.8 L504.9,255.8 L505.2,255.8" fill="none" stroke="#6e6e6e" stroke-width="0.9"/>
<path d="M505.2,255.8 L504.9,255.8 L504.7,255.8 L504.4,255.8 L504.2,255.8 L503.9,255.8 L503.7,255.8 L503.4,255.9 L503.2,255.9 L502.9,255.9 L502.7,255.9 L502.4,255.9 L502.2,256.0 L501.9,256.0 L501.7,256.0 L501.4,256.0 L501.2,256.1 L500.9,256.1 L500.7,256.2 L500.4,256.2 L500.2,256.2 L500.0,256.3 L499.7,256.3 L499.5,256.4 L499.2,256.4 L499.0,256.5 L498.7,256.5 L498.5,256.6 L498.2,256.7 L498.0,256.7 L497.7,256.8 L497.5,256.8 L497.3,256.9 L497.0,257.0 L496.8,257.1 L496.5,257.1 L496.3,257.2 L496.1,257.3 L495.8,257.4 L495.6,257.5 L495.3,257.5 L495.1,257.6 L494.9,257.7 L494.6,257.8 L494.4,257.9 L494.2,258.0 L493.9,258.1 L493.7,258.2 L493.5,258.3 L493.3,258.4 L493.0,258.5 L492.8,258.6 L492.6,258.7 L492.3,258.8 L492.1,258.9 L491.9,259.1 L491.7,259.2 L491.5,259.3 L491.2,259.4 L491.0,259.5 L490.8,259.7 L490.6,259.8 L490.4,259.9 L490.1,260.0 L489.9,260.2 L489.7,260.3 L489.5,260.4 L489.3,260.6 L489.1,260.7 L488.9,260.9 L488.7,261.0 L488.5,261.2 L488.3,261.3 L488.1,261.4 L487.9,261.6 L487.7,261.8 L487.5,261.9 L487.3,262.1 L487.1,262.2 L486.9,262.4 L486.7,262.5 L486.5,262.7 L486.3,262.9 L486.1,263.0 L485.9,263.2 L485.7,263.4 L485.6,263.5 L485.4,263.7 L485.2,263.9 L485.0,264.1 L484.8,264.2 L484.7,264.4 L484.5,264.6 L484.3,264.8 L484.1,265.0 L484.0,265.1 L483.8,265.3 L483.6,265.5 L483.5,265.7 L483.3,265.9 L483.1,266.1 L483.0,266.3 L482.8,266.5 L482.7,266.7 L482.5,266.9 L482.3,267.1 L482.2,267.3 L482.0,267.5 L481.9,267.7 L481.7,267.9 L481.6,268.1 L481.5,268.3 L481.3,268.5 L481.2,268.7 L481.0,268.9 L480.9,269.1 L480.8,269.3 L480.6,269.6 L480.5,269.8 L480.4,270.0 L480.3,270.2 L480.1,270.4 L480.0,270.6 L479.9,270.9 L479.8,271.1 L479.7,271.3 L479.5,271.5 L479.4,271.8 L479.3,272.0 L479.2,272.2 L479.1,272.4 L479.0,272.7 L478.9,272.9 L478.8,273.1 L478.7,273.3 L478.6,273.6 L478.5,273.8 L478.4,274.0 L478.3,274.3 L478.2,274.5 L478.1,274.8 L478.0,275.0 L478.0,275.2 L477.9,275.5 L477.8,275.7 L477.7,275.9 L477.7,276.2 L477.6,276.4 L477.5,276.7 L477.4,276.9 L477.4,277.1 L477.3,277.4 L477.3,277.6 L477.2,277.9 L477.1,278.1 L477.1,278.4 L477.0,278.6 L477.0,278.9 L476.9,279.1 L476.9,279.4 L476.8,279.6 L476.8,279.9 L476.8,280.1 L476.7,280.3 L476.7,280.6 L476.6,280.8 L476.6,281.1 L476.6,281.3 L476.6,281.6 L476.5,281.8 L476.5,282.1 L476.5,282.3 L476.5,282.6 L476.4,282.8 L476.4,283.1 L476.4,283.3 L476.4,283.6 L476.4,283.9 L476.4,284.1 L476.4,284.4 L476.4,284.6 L476.4,284.9 L476.4,285.1 L476.4,285.4 L476.4,285.6 L476.4,285.9 L476.4,286.1 L476.4,286.4 L476.5,286.6 L476.5,286.9 L476.5,287.1 L476.5,287.4 L476.6,287.6 L476.6,287.9 L476.6,288.1 L476.6,288.4 L476.7,288.6 L476.7,288.9 L476.8,289.1 L476.8,289.4 L476.8,289.6 L476.9,289.9 L476.9,290.1 L477.0,290.3 L477.0,290.6 L477.1,290.8 L477.1,291.1 L477.2,291.3 L477.3,291.6 L477.3,291.8 L477.4,292.1 L477.4,292.3 L477.5,292.5 L477.6,292.8 L477.7,293.0 L477.7,293.3 L477.8,293.5 L477.9,293.7 L478.0,294.0 L478.0,294.2 L478.1,294.5 L478.2,294.7 L478.3,294.9 L478.4,295.2 L478.5,295.4 L478.6,295.6 L478.7,295.9 L478.8,296.1 L478.9,296.3 L479.0,296.5 L479.1,296.8 L479.2,297.0 L479.3,297.2 L479.4,297.5 L479.5,297.7 L479.7,297.9 L479.8,298.1 L479.9,298.3 L480.0,298.6 L480.1,298.8 L480.3,299.0 L480.4,299.2 L480.5,299.4 L480.6,299.7 L480.8,299.9 L480.9,300.1 L481.0,300.3 L481.2,300.5 L481.3,300.7 L481.5,300.9 L481.6,301.1 L481.7,301.3 L481.9,301.5 L482.0,301.7 L482.2,301.9 L482.3,302.1 L482.5,302.3 L482.7,302.5 L482.8,302.7 L483.0,302.9 L483.1,303.1 L483.3,303.3 L483.5,303.5 L483.6,303.7 L483.8,303.9 L484.0,304.1 L484.1,304.2 L484.3,304.4 L484.5,304.6 L484.7,304.8 L484.8,305.0 L485.0,305.1 L485.2,305.3 L485.4,305.5 L485.6,305.7 L485.7,305.8 L485.9,306.0 L486.1,306.2 L486.3,306.3 L486.5,306.5 L486.7,306.7 L486.9,306.8 L487.1,307.0 L487.3,307.1 L487.5,307.3 L487.7,307.5 L487.9,307.6 L488.1,307.8 L488.3,307.9 L488.5,308.1 L488.7,308.2 L488.9,308.3 L489.1,308.5 L489.3,308.6 L489.5,308.8 L489.7,308.9 L489.9,309.0 L490.1,309.2 L490.4,309.3 L490.6,309.4 L490.8,309.6" fill="none" stroke="#6e6e6e" stroke-width="0.9"/>
<line x1="617.5" y1="149.8" x2="617.5" y2="362.3" stroke="#6a6a6a" stroke-width="1"/>
<line x1="640.5" y1="149.8" x2="640.5" y2="362.3" stroke="#6a6a6a" stroke-width="1"/>
<line x1="663.5" y1="149.8" x2="663.5" y2="362.3" stroke="#6a6a6a" stroke-width="1"/>
<line x1="686.5" y1="149.8" x2="686.5" y2="362.3" stroke="#6a6a6a" stroke-width="1"/>
<line x1="709.5" y1="149.8" x2="709.5" y2="362.3" stroke="#6a6a6a" stroke-width="1"/>
<line x1="732.5" y1="149.8" x2="732.5" y2="362.3" stroke="#6a6a6a" stroke-width="1"/>
<line x1="755.5" y1="149.8" x2="755.5" y2="362.3" stroke="#6a6a6a" stroke-width="1"/>
<line x1="778.5" y1="149.8" x2="778.5" y2="362.3" stroke="#6a6a6a" stroke-width="1"/>
<line x1="801.5" y1="149.8" x2="801.5" y2="362.3" stroke="#6a6a6a" stroke-width="1"/>
<line x1="824.5" y1="149.8" x2="824.5" y2="362.3" stroke="#6a6a6a" stroke-width="1"/>
<line x1="847.5" y1="149.8" x2="847.5" y2="362.3" stroke="#6a6a6a" stroke-width="1"/>
<line x1="617.5" y1="149.5" x2="847.3" y2="149.5" stroke="#6a6a6a" stroke-width="1"/>
<line x1="617.5" y1="171.5" x2="847.3" y2="171.5" stroke="#6a6a6a" stroke-width="1"/>
<line x1="617.5" y1="192.5" x2="847.3" y2="192.5" stroke="#6a6a6a" stroke-width="1"/>
<line x1="617.5" y1="213.5" x2="847.3" y2="213.5" stroke="#6a6a6a" stroke-width="1"/>
<line x1="617.5" y1="234.5" x2="847.3" y2="234.5" stroke="#6a6a6a" stroke-width="1"/>
<line x1="617.5" y1="256.5" x2="847.3" y2="256.5" stroke="#6a6a6a" stroke-width="1"/>
<line x1="617.5" y1="277.5" x2="847.3" y2="277.5" stroke="#6a6a6a" stroke-width="1"/>
<line x1="617.5" y1="298.5" x2="847.3" y2="298.5" stroke="#6a6a6a" stroke-width="1"/>
<line x1="617.5" y1="319.5" x2="847.3" y2="319.5" stroke="#6a6a6a" stroke-width="1"/>
<line x1="617.5" y1="341.5" x2="847.3" y2="341.5" stroke="#6a6a6a" stroke-width="1"/>
<line x1="617.5" y1="362.5" x2="847.3" y2="362.5" stroke="#6a6a6a" stroke-width="1"/>
<rect x="617.5" y="149.5" width="230" height="213" fill="none" stroke="#a8a8a8" stroke-width="1.2"/>
<line x1="314.5" y1="396.6" x2="314.5" y2="607.6" stroke="#6a6a6a" stroke-width="1"/>
<line x1="367.5" y1="396.6" x2="367.5" y2="607.6" stroke="#6a6a6a" stroke-width="1"/>
<line x1="420.5" y1="396.6" x2="420.5" y2="607.6" stroke="#6a6a6a" stroke-width="1"/>
<line x1="473.5" y1="396.6" x2="473.5" y2="607.6" stroke="#6a6a6a" stroke-width="1"/>
<line x1="526.5" y1="396.6" x2="526.5" y2="607.6" stroke="#6a6a6a" stroke-width="1"/>
<line x1="580.5" y1="396.6" x2="580.5" y2="607.6" stroke="#6a6a6a" stroke-width="1"/>
<line x1="633.5" y1="396.6" x2="633.5" y2="607.6" stroke="#6a6a6a" stroke-width="1"/>
<line x1="686.5" y1="396.6" x2="686.5" y2="607.6" stroke="#6a6a6a" stroke-width="1"/>
<line x1="739.5" y1="396.6" x2="739.5" y2="607.6" stroke="#6a6a6a" stroke-width="1"/>
<line x1="792.5" y1="396.6" x2="792.5" y2="607.6" stroke="#6a6a6a" stroke-width="1"/>
<line x1="846.5" y1="396.6" x2="846.5" y2="607.6" stroke="#6a6a6a" stroke-width="1"/>
<line x1="314" y1="396.5" x2="846.2" y2="396.5" stroke="#6a6a6a" stroke-width="1"/>
<line x1="314" y1="417.5" x2="846.2" y2="417.5" stroke="#6a6a6a" stroke-width="1"/>
<line x1="314" y1="438.5" x2="846.2" y2="438.5" stroke="#6a6a6a" stroke-width="1"/>
<line x1="314" y1="459.5" x2="846.2" y2="459.5" stroke="#6a6a6a" stroke-width="1"/>
<line x1="314" y1="481.5" x2="846.2" y2="481.5" stroke="#6a6a6a" stroke-width="1"/>
<line x1="314" y1="502.5" x2="846.2" y2="502.5" stroke="#6a6a6a" stroke-width="1"/>
<line x1="314" y1="523.5" x2="846.2" y2="523.5" stroke="#6a6a6a" stroke-width="1"/>
<line x1="314" y1="544.5" x2="846.2" y2="544.5" stroke="#6a6a6a" stroke-width="1"/>
<line x1="314" y1="565.5" x2="846.2" y2="565.5" stroke="#6a6a6a" stroke-width="1"/>
<line x1="314" y1="586.5" x2="846.2" y2="586.5" stroke="#6a6a6a" stroke-width="1"/>
<line x1="314" y1="607.5" x2="846.2" y2="607.5" stroke="#6a6a6a" stroke-width="1"/>
<rect x="314.5" y="396.5" width="532" height="211" fill="none" stroke="#a8a8a8" stroke-width="1.2"/>
<text transform="translate(258,137.7) scale(1,1.1)" fill="#e2e262" font-size="11.67" font-weight="normal" text-anchor="start" stroke="#e2e262" stroke-width="0.25" >Tr1&#160;S11&#160;Smith&#160;(R+jX)&#160;Scale&#160;1.000U&#160;[F1&#160;M]</text>
<text transform="translate(258,159.5) scale(1,1.1)" fill="#b0b050" font-size="11.67" font-weight="normal" text-anchor="start" >&#160;1&#160;&#160;2.4000000&#160;GHz&#160;&#160;48.273&#160;Ω&#160;&#160;13.682&#160;Ω</text>
<text transform="translate(258,171.1) scale(1,1.1)" fill="#b0b050" font-size="11.67" font-weight="normal" text-anchor="start" >&#160;2&#160;&#160;2.5000000&#160;GHz&#160;&#160;43.321&#160;Ω&#160;-18.423&#160;Ω</text>
<text transform="translate(258,182.7) scale(1,1.1)" fill="#b0b050" font-size="11.67" font-weight="normal" text-anchor="start" >&gt;3&#160;&#160;2.6000000&#160;GHz&#160;&#160;27.132&#160;Ω&#160;-192.94&#160;mΩ</text>
<path d="M354.8,253.5 L358.5,249.5 L362.0,246.5 L368.6,246.3 L369.4,245.0 L370.3,243.8 L371.3,242.6 L372.4,241.5 L373.5,240.5 L374.8,239.6 L376.0,238.7 L377.4,238.0 L378.8,237.3 L380.2,236.8 L381.7,236.4 L383.2,236.0 L384.8,235.8 L386.3,235.7 L387.8,235.7 L389.4,235.8 L390.9,236.1 L392.4,236.4 L393.9,236.8 L395.3,237.4 L396.7,238.0 L398.1,238.8 L399.4,239.6 L400.6,240.6 L401.7,241.6 L402.8,242.7 L403.8,243.9 L404.7,245.2 L405.5,246.5 L406.2,247.8 L406.8,249.2 L407.3,250.7 L407.7,252.2 L408.0,253.7 L408.2,255.2 L408.3,256.8 L408.3,258.3 L408.1,259.9 L407.8,261.4 L407.5,262.9 L407.0,264.3 L406.4,265.8 L405.7,267.1 L404.9,268.5 L404.1,269.7 L403.1,270.9 L402.0,272.1 L400.9,273.1 L399.7,274.1 L398.4,275.0 L397.1,275.7 L395.7,276.4 L394.3,277.0 L392.8,277.5 L391.3,277.9 L389.8,278.1 L388.3,278.3 L386.7,278.3 L385.2,278.2 L383.7,278.0 L382.2,277.7 L380.7,277.3 L379.2,276.8 L377.8,276.2 L376.4,275.5 L375.1,274.7 L373.9,273.8 L372.7,272.8 L371.6,271.7 L370.6,270.5 L369.6,269.3 L368.8,268.0 L368.0,266.7 L367.4,265.3 L366.8,263.8 L366.4,262.4 L366.1,260.9 L365.8,259.3 L365.7,257.8 L365.7,256.3" fill="none" stroke="#c4c43c" stroke-width="1.0"/>
<path d="M542.5,151.5 Q539.5,153.5 541.5,156.5" fill="none" stroke="#b8b8a8" stroke-width="1.1"/>
<rect x="540.8" y="158.39999999999998" width="1.6" height="1.6" fill="#b8b8b0"/>
<rect x="540.8" y="163.0" width="1.6" height="1.6" fill="#b8b8b0"/>
<rect x="540.8" y="170.2" width="1.6" height="1.6" fill="#b8b8b0"/>
<rect x="540.8" y="174.7" width="1.6" height="1.6" fill="#b8b8b0"/>
<rect x="540.8" y="181.7" width="1.6" height="1.6" fill="#b8b8b0"/>
<path d="M367,256.3 L363.0,244.3 L371.0,244.3 Z" fill="none" stroke="#e2e262" stroke-width="1.2"/>
<text transform="translate(363.5,243) scale(1,1.1)" fill="#e2e262" font-size="11.67" font-weight="normal" text-anchor="start" >3</text>
<path d="M398.5,242 L395.5,252 M398.5,242 L401.5,252 M394.0,253 L403.0,253" fill="none" stroke="#e2e262" stroke-width="1.1"/><path d="M395.5,252 L394.0,253 M401.5,252 L403.0,253" stroke="#e2e262" stroke-width="1.1"/>
<text transform="translate(395,263.5) scale(1,1.1)" fill="#e2e262" font-size="11.67" font-weight="normal" text-anchor="start" >1</text>
<path d="M395,277.3 L392.0,287.3 M395,277.3 L398.0,287.3 M390.5,288.3 L399.5,288.3" fill="none" stroke="#e2e262" stroke-width="1.1"/><path d="M392.0,287.3 L390.5,288.3 M398.0,287.3 L399.5,288.3" stroke="#e2e262" stroke-width="1.1"/>
<text transform="translate(391.5,298) scale(1,1.1)" fill="#e2e262" font-size="11.67" font-weight="normal" text-anchor="start" >2</text>
<path d="M351.6,363.5 L347.1,369.0 L356.1,369.0 Z" fill="none" stroke="#e2e262" stroke-width="1.2"/>
<path d="M446.3,363.5 L441.8,369.0 L450.8,369.0 Z" fill="none" stroke="#e2e262" stroke-width="1.2"/>
<path d="M543,363.5 L538.5,369.0 L547.5,369.0 Z" fill="#e2e262" stroke="#e2e262" stroke-width="1.2"/>
<text transform="translate(562,137.7) scale(1,1.1)" fill="#40d0d0" font-size="11.67" font-weight="normal" text-anchor="start" stroke="#40d0d0" stroke-width="0.25" >Tr2&#160;S11&#160;Log&#160;Mag&#160;10.00dB/&#160;Ref&#160;0.000dB&#160;[F1&#160;M]</text>
<rect x="624.5" y="151.2" width="7" height="8.0" fill="#000"/><rect x="645.5" y="151.2" width="63" height="8.0" fill="#000"/><rect x="715.5" y="151.2" width="21" height="8.0" fill="#000"/><rect x="743.5" y="151.2" width="49" height="8.0" fill="#000"/><rect x="799.5" y="151.2" width="14" height="8.0" fill="#000"/>
<text transform="translate(617.5,159.5) scale(1,1.1)" fill="#30a8a8" font-size="11.67" font-weight="normal" text-anchor="start" >&#160;1&#160;&#160;2.4000000&#160;GHz&#160;-17.312&#160;dB</text>
<rect x="624.5" y="162.8" width="7" height="8.0" fill="#000"/><rect x="645.5" y="162.8" width="63" height="8.0" fill="#000"/><rect x="715.5" y="162.8" width="21" height="8.0" fill="#000"/><rect x="743.5" y="162.8" width="49" height="8.0" fill="#000"/><rect x="799.5" y="162.8" width="14" height="8.0" fill="#000"/>
<text transform="translate(617.5,171.1) scale(1,1.1)" fill="#30a8a8" font-size="11.67" font-weight="normal" text-anchor="start" >&#160;2&#160;&#160;2.5000000&#160;GHz&#160;-13.828&#160;dB</text>
<rect x="617.5" y="174.4" width="14" height="8.0" fill="#000"/><rect x="645.5" y="174.4" width="63" height="8.0" fill="#000"/><rect x="715.5" y="174.4" width="21" height="8.0" fill="#000"/><rect x="743.5" y="174.4" width="49" height="8.0" fill="#000"/><rect x="799.5" y="174.4" width="14" height="8.0" fill="#000"/>
<text transform="translate(617.5,182.7) scale(1,1.1)" fill="#30a8a8" font-size="11.67" font-weight="normal" text-anchor="start" >&gt;3&#160;&#160;2.6000000&#160;GHz&#160;-10.629&#160;dB</text>
<text transform="translate(607.5,152.60000000000002) scale(1,1.02)" fill="#c8c8c8" font-size="11.67" font-weight="normal" text-anchor="end" >50.00</text>
<text transform="translate(607.5,173.85000000000002) scale(1,1.02)" fill="#c8c8c8" font-size="11.67" font-weight="normal" text-anchor="end" >40.00</text>
<text transform="translate(607.5,195.10000000000002) scale(1,1.02)" fill="#c8c8c8" font-size="11.67" font-weight="normal" text-anchor="end" >30.00</text>
<text transform="translate(607.5,216.35000000000002) scale(1,1.02)" fill="#c8c8c8" font-size="11.67" font-weight="normal" text-anchor="end" >20.00</text>
<text transform="translate(607.5,237.60000000000002) scale(1,1.02)" fill="#c8c8c8" font-size="11.67" font-weight="normal" text-anchor="end" >10.00</text>
<text transform="translate(607.5,258.85) scale(1,1.02)" fill="#40d0d0" font-size="11.67" font-weight="normal" text-anchor="end" >0.000</text>
<text transform="translate(607.5,280.1) scale(1,1.02)" fill="#c8c8c8" font-size="11.67" font-weight="normal" text-anchor="end" >-10.00</text>
<text transform="translate(607.5,301.35) scale(1,1.02)" fill="#c8c8c8" font-size="11.67" font-weight="normal" text-anchor="end" >-20.00</text>
<text transform="translate(607.5,322.6) scale(1,1.02)" fill="#c8c8c8" font-size="11.67" font-weight="normal" text-anchor="end" >-30.00</text>
<text transform="translate(607.5,343.85) scale(1,1.02)" fill="#c8c8c8" font-size="11.67" font-weight="normal" text-anchor="end" >-40.00</text>
<text transform="translate(607.5,365.1) scale(1,1.02)" fill="#c8c8c8" font-size="11.67" font-weight="normal" text-anchor="end" >-50.00</text>
<path d="M617.5,272.7 L638.0,275.3 L667.3,282.0 L694.0,292.7 L704.7,298.0 L720.7,300.7 L736.7,295.3 L768.7,284.7 L790.0,280.7 L816.7,279.5 L847.0,278.3" fill="none" stroke="#30b0a0" stroke-width="1.4" stroke-linejoin="round"/>
<path d="M611,250.5 L617,256 L611,261.5 Z" fill="#40d0d0"/>
<path d="M854,250.5 L848,256 L854,261.5 Z" fill="#40d0d0"/>
<path d="M694,292.7 L691.0,301.7 M694,292.7 L697.0,301.7 M689.5,302.7 L698.5,302.7" fill="none" stroke="#40d0d0" stroke-width="1.1"/><path d="M691.0,301.7 L689.5,302.7 M697.0,301.7 L698.5,302.7" stroke="#40d0d0" stroke-width="1.1"/>
<text transform="translate(690.5,314) scale(1,1.1)" fill="#40d0d0" font-size="11.67" font-weight="normal" text-anchor="start" >1</text>
<path d="M769.5,285.2 L766.5,295.2 M769.5,285.2 L772.5,295.2 M765.0,296.2 L774.0,296.2" fill="none" stroke="#40d0d0" stroke-width="1.1"/><path d="M766.5,295.2 L765.0,296.2 M772.5,295.2 L774.0,296.2" stroke="#40d0d0" stroke-width="1.1"/>
<text transform="translate(766,306.8) scale(1,1.1)" fill="#40d0d0" font-size="11.67" font-weight="normal" text-anchor="start" >2</text>
<path d="M847,273.3 L843.0,266.3 L851.0,266.3 Z" fill="none" stroke="#40d0d0" stroke-width="1.2"/>
<text transform="translate(843.5,265.5) scale(1,1.1)" fill="#40d0d0" font-size="9" font-weight="normal" text-anchor="start" >3</text>
<text transform="translate(848.5,281) scale(1,1.1)" fill="#40d0d0" font-size="10" font-weight="normal" text-anchor="start" >2</text>
<path d="M694,363.5 L689.5,369.0 L698.5,369.0 Z" fill="none" stroke="#40d0d0" stroke-width="1.2"/>
<path d="M770,363.5 L765.5,369.0 L774.5,369.0 Z" fill="none" stroke="#40d0d0" stroke-width="1.2"/>
<path d="M847.3,363.5 L842.3,369.0 L852.3,369.0 Z" fill="#40d0d0" stroke="#40d0d0" stroke-width="1.2"/>
<path d="M249,374 L256,379.5 L249,385 Z" fill="#d038d0"/>
<rect x="257" y="374" width="22" height="11.5" fill="#d038d0"/>
<text transform="translate(258,383.5) scale(1,1.1)" fill="#5a0a5a" font-size="11.67" font-weight="normal" text-anchor="start" stroke="#5a0a5a" stroke-width="0.25" >Tr3</text>
<text transform="translate(286,383.5) scale(1,1.1)" fill="#d038d0" font-size="11.67" font-weight="normal" text-anchor="start" stroke="#d038d0" stroke-width="0.25" >S11&#160;SWR&#160;1.000/&#160;Ref&#160;1.000&#160;[F1&#160;M]</text>
<rect x="326.0" y="397.7" width="7" height="8.0" fill="#000"/><rect x="347.0" y="397.7" width="63" height="8.0" fill="#000"/><rect x="417.0" y="397.7" width="21" height="8.0" fill="#000"/><rect x="452.0" y="397.7" width="42" height="8.0" fill="#000"/>
<text transform="translate(319,406.0) scale(1,1.1)" fill="#8a2aa0" font-size="11.67" font-weight="normal" text-anchor="start" >&#160;1&#160;&#160;2.4000000&#160;GHz&#160;&#160;1.3151</text>
<rect x="326.0" y="409.4" width="7" height="8.0" fill="#000"/><rect x="347.0" y="409.4" width="63" height="8.0" fill="#000"/><rect x="417.0" y="409.4" width="21" height="8.0" fill="#000"/><rect x="452.0" y="409.4" width="42" height="8.0" fill="#000"/>
<text transform="translate(319,417.7) scale(1,1.1)" fill="#8a2aa0" font-size="11.67" font-weight="normal" text-anchor="start" >&#160;2&#160;&#160;2.5000000&#160;GHz&#160;&#160;1.5080</text>
<rect x="319.0" y="421.1" width="14" height="8.0" fill="#000"/><rect x="347.0" y="421.1" width="63" height="8.0" fill="#000"/><rect x="417.0" y="421.1" width="21" height="8.0" fill="#000"/><rect x="452.0" y="421.1" width="42" height="8.0" fill="#000"/>
<text transform="translate(319,429.4) scale(1,1.1)" fill="#8a2aa0" font-size="11.67" font-weight="normal" text-anchor="start" >&gt;3&#160;&#160;2.6000000&#160;GHz&#160;&#160;1.8301</text>
<text transform="translate(302.5,399.5) scale(1,1.05)" fill="#c8c8c8" font-size="11.67" font-weight="normal" text-anchor="end" >11.00</text>
<text transform="translate(302.5,420.6) scale(1,1.05)" fill="#c8c8c8" font-size="11.67" font-weight="normal" text-anchor="end" >10.00</text>
<text transform="translate(302.5,441.7) scale(1,1.05)" fill="#c8c8c8" font-size="11.67" font-weight="normal" text-anchor="end" >9.000</text>
<text transform="translate(302.5,462.8) scale(1,1.05)" fill="#c8c8c8" font-size="11.67" font-weight="normal" text-anchor="end" >8.000</text>
<text transform="translate(302.5,483.9) scale(1,1.05)" fill="#c8c8c8" font-size="11.67" font-weight="normal" text-anchor="end" >7.000</text>
<text transform="translate(302.5,505.0) scale(1,1.05)" fill="#c8c8c8" font-size="11.67" font-weight="normal" text-anchor="end" >6.000</text>
<text transform="translate(302.5,526.1) scale(1,1.05)" fill="#c8c8c8" font-size="11.67" font-weight="normal" text-anchor="end" >5.000</text>
<text transform="translate(302.5,547.1999999999999) scale(1,1.05)" fill="#c8c8c8" font-size="11.67" font-weight="normal" text-anchor="end" >4.000</text>
<text transform="translate(302.5,568.3000000000001) scale(1,1.05)" fill="#c8c8c8" font-size="11.67" font-weight="normal" text-anchor="end" >3.000</text>
<text transform="translate(302.5,589.4) scale(1,1.05)" fill="#c8c8c8" font-size="11.67" font-weight="normal" text-anchor="end" >2.000</text>
<text transform="translate(302.5,610.5) scale(1,1.05)" fill="#d038d0" font-size="11.67" font-weight="normal" text-anchor="end" >1.000</text>
<path d="M314.0,578.7 L366.7,587.5 L421.3,594.7 L474.7,600.0 L491.0,601.9 L520.0,603.5 L560.0,603.5 L581.0,602.0 L666.5,596.3 L738.0,592.0 L793.0,590.2 L846.0,589.6" fill="none" stroke="#a020b0" stroke-width="1.5" stroke-linejoin="round"/>
<path d="M307.5,602 L313.5,607.3 L307.5,612.6 Z" fill="#d038d0"/>
<path d="M491.3,601.5 L487.3,610.5 L495.3,610.5 Z" fill="none" stroke="#d038d0" stroke-width="1.2"/>
<path d="M491.3,609 L486.8,616 L495.8,616 Z" fill="none" stroke="#d038d0" stroke-width="1.2"/>
<path d="M667,596 L663.0,608 L671.0,608 Z" fill="none" stroke="#d038d0" stroke-width="1.2"/>
<path d="M667,609 L662.5,616 L671.5,616 Z" fill="none" stroke="#d038d0" stroke-width="1.2"/>
<path d="M846,584 L842.0,577 L850.0,577 Z" fill="none" stroke="#d038d0" stroke-width="1.2"/>
<text transform="translate(842.5,575.5) scale(1,1.1)" fill="#d038d0" font-size="9" font-weight="normal" text-anchor="start" >3</text>
<text transform="translate(847.5,592) scale(1,1.1)" fill="#d038d0" font-size="10" font-weight="normal" text-anchor="start" >3</text>
<path d="M853,601 L853,614.5 L839.5,614.5 Z" fill="#d038d0"/>
</g></svg>
</body></html>
